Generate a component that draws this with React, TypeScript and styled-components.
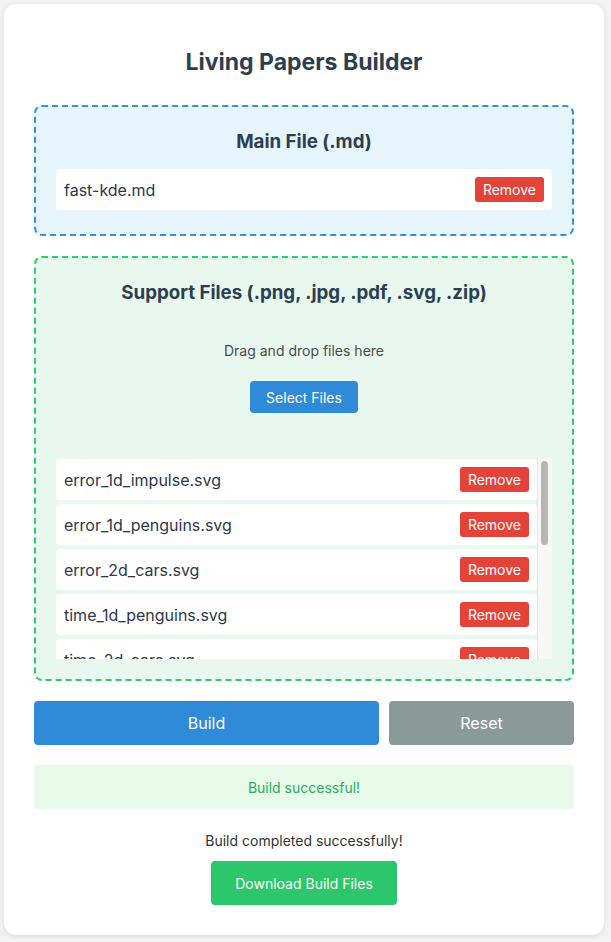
import React from "react";
import styled, { createGlobalStyle } from "styled-components";

const GlobalStyle = createGlobalStyle`
  html, body {
    margin: 0;
    padding: 0;
    background: #f3f3f3;
    font-family: Inter, "Noto Sans", "Liberation Sans", sans-serif;
  }
  * { box-sizing: border-box; }
`;

const Card = styled.div`
  width: 600px;
  margin: 4px;
  padding: 30px;
  background: #ffffff;
  border-radius: 12px;
  box-shadow: 0 1px 6px rgba(0, 0, 0, 0.1);
`;

const Title = styled.h1`
  margin: 15px 0 30px;
  font-size: 23px;
  line-height: 26px;
  font-weight: 700;
  text-align: center;
  color: #2c3e50;
`;

const DropBox = styled.section<{ $variant: "blue" | "green" }>`
  border: 2px dashed ${(p) => (p.$variant === "blue" ? "#3490dc" : "#2ecc71")};
  background: ${(p) => (p.$variant === "blue" ? "#e6f4fc" : "#e8f8ee")};
  border-radius: 8px;
  padding: 20px;
  & + & {
    margin-top: 20px;
  }
`;

const BoxTitle = styled.h3`
  margin: 0 0 13px;
  font-size: 18.72px;
  line-height: 29px;
  font-weight: 700;
  text-align: center;
  color: #2c3e50;
`;

const DropZone = styled.div`
  padding: 20px 0;
  display: flex;
  flex-direction: column;
  align-items: center;
`;

const Hint = styled.p`
  margin: 0 0 19px;
  font-size: 14px;
  line-height: 22px;
  color: #4a4a4a;
`;

const SelectButton = styled.button`
  height: 32px;
  padding: 0 16px;
  border: none;
  border-radius: 4px;
  background: #2f8bd7;
  color: #ffffff;
  font-family: inherit;
  font-size: 14px;
`;

const ListFrame = styled.div`
  margin-top: 25px;
  height: 201px;
  display: flex;
`;

const FileList = styled.div`
  flex: 1;
  padding-top: 1px;
  overflow: hidden;
`;

const ScrollTrack = styled.div`
  width: 15px;
  flex: none;
  background: #f7f7f7;
  border-left: 1px solid #e7e7e7;
  padding: 3px 3px 0 3px;
`;

const ScrollThumb = styled.div`
  width: 7px;
  height: 84px;
  border-radius: 4px;
  background: #b6b6b6;
`;

const FileRow = styled.div`
  display: flex;
  align-items: center;
  justify-content: space-between;
  background: #ffffff;
  border-radius: 4px;
  padding: 8px;
  margin-bottom: 4px;
`;

const FileName = styled.span`
  font-size: 16px;
  color: #2d3748;
`;

const RemoveButton = styled.button`
  height: 25px;
  padding: 0 8px;
  border: none;
  border-radius: 3px;
  background: #e4433a;
  color: #ffffff;
  font-family: inherit;
  font-size: 14px;
`;

const Actions = styled.div`
  margin-top: 20px;
  display: grid;
  grid-template-columns: 345fr 185fr;
  gap: 10px;
`;

const ActionButton = styled.button<{ $tone: "primary" | "muted" }>`
  height: 44px;
  border: none;
  border-radius: 4px;
  background: ${(p) => (p.$tone === "primary" ? "#2f8bd7" : "#8a9a99")};
  color: #ffffff;
  font-family: inherit;
  font-size: 16px;
`;

const Status = styled.div`
  margin-top: 20px;
  height: 44px;
  display: flex;
  align-items: center;
  justify-content: center;
  background: #e8faea;
  color: #27ae60;
  border-radius: 4px;
  font-size: 14px;
`;

const Result = styled.div`
  margin-top: 21px;
  display: flex;
  flex-direction: column;
  align-items: center;
`;

const ResultText = styled.p`
  margin: 0 0 9px;
  font-size: 14px;
  line-height: 22px;
  color: #333333;
`;

const DownloadButton = styled.button`
  height: 44px;
  padding: 0 24px;
  border: none;
  border-radius: 4px;
  background: #2cc66b;
  color: #ffffff;
  font-family: inherit;
  font-size: 14px;
`;

const supportFiles = [
  "error_1d_impulse.svg",
  "error_1d_penguins.svg",
  "error_2d_cars.svg",
  "time_1d_penguins.svg",
  "time_2d_cars.svg",
  "time_1d_impulse.svg",
  "error_2d_penguins.svg",
  "time_2d_penguins.svg",
  "kde_1d_impulse.svg",
  "kde_2d_cars.svg",
  "figures.zip",
];

export default function App() {
  return (
    <>
      <GlobalStyle />
      <Card>
        <Title>Living Papers Builder</Title>
        <DropBox $variant="blue">
          <BoxTitle>Main File (.md)</BoxTitle>
          <FileRow>
            <FileName>fast-kde.md</FileName>
            <RemoveButton>Remove</RemoveButton>
          </FileRow>
        </DropBox>
        <DropBox $variant="green">
          <BoxTitle>Support Files (.png, .jpg, .pdf, .svg, .zip)</BoxTitle>
          <DropZone>
            <Hint>Drag and drop files here</Hint>
            <SelectButton>Select Files</SelectButton>
          </DropZone>
          <ListFrame>
            <FileList>
              {supportFiles.map((f) => (
                <FileRow key={f}>
                  <FileName>{f}</FileName>
                  <RemoveButton>Remove</RemoveButton>
                </FileRow>
              ))}
            </FileList>
            <ScrollTrack>
              <ScrollThumb />
            </ScrollTrack>
          </ListFrame>
        </DropBox>
        <Actions>
          <ActionButton $tone="primary">Build</ActionButton>
          <ActionButton $tone="muted">Reset</ActionButton>
        </Actions>
        <Status>Build successful!</Status>
        <Result>
          <ResultText>Build completed successfully!</ResultText>
          <DownloadButton>Download Build Files</DownloadButton>
        </Result>
      </Card>
    </>
  );
}
